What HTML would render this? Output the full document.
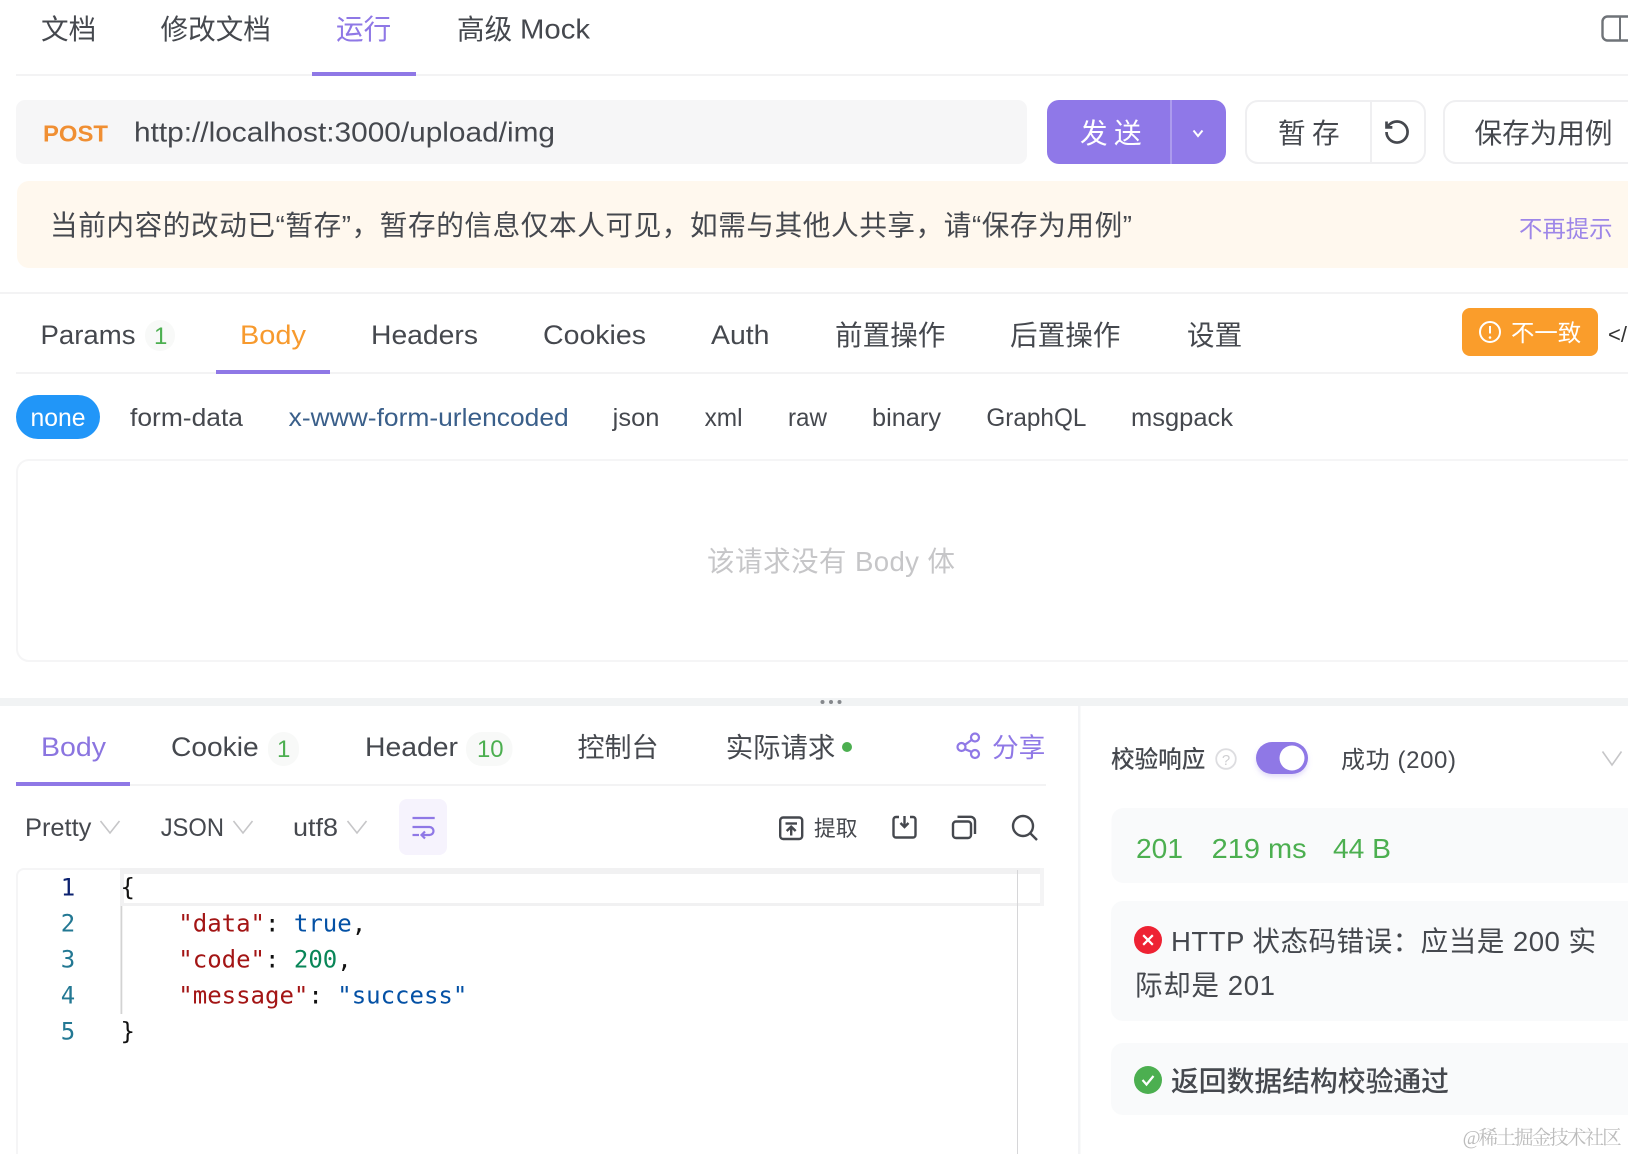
<!DOCTYPE html>
<html lang="zh-CN"><head><meta charset="utf-8"><title>运行</title>
<style>
html,body{margin:0;padding:0;background:#fff;width:1628px;height:1154px;overflow:hidden}
svg{display:block;filter:blur(.35px)}
text{font-family:"Liberation Sans","Noto Sans CJK SC",sans-serif;fill:#45484e;font-size:27.6px}
.l{font-size:27px}
.s{font-size:25px}
.p{fill:#8f78e6}
.g{fill:#4caf50}
.m{font-family:"DejaVu Sans Mono","Liberation Mono",monospace;font-size:24px;fill:#111}
.n{fill:#237893;text-anchor:middle}
</style></head><body>
<svg width="1628" height="1154" viewBox="0 0 1628 1154" xmlns="http://www.w3.org/2000/svg">
<defs><filter id="sh" x="-20%" y="-20%" width="140%" height="160%"><feDropShadow dx="0" dy="3" stdDeviation="2.500" flood-color="#8f78e6" flood-opacity=".25"/></filter></defs>
<rect width="1628" height="1154" fill="#fff"/>

<!-- top tabs -->
<text x="41" y="39">文档</text>
<text x="160.500" y="39">修改文档</text>
<text x="336" y="39" class="p">运行</text>
<text x="457" y="39">高级</text>
<text x="520" y="38.500" style="font-size:27.500px" textLength="70" lengthAdjust="spacingAndGlyphs">Mock</text>
<rect x="16" y="74" width="1612" height="2" fill="#f3f3f4"/>
<rect x="312" y="72" width="104" height="4" fill="#8f78e6"/>
<rect x="1602.500" y="16.500" width="40" height="24" rx="5" fill="none" stroke="#6f7378" stroke-width="2.400"/>
<line x1="1620" y1="16" x2="1620" y2="41" stroke="#6f7378" stroke-width="2"/>

<!-- url bar -->
<rect x="16" y="100" width="1011" height="64" rx="9" fill="#f6f6f7"/>
<text x="43" y="141.700" style="font-size:23px;font-weight:700;fill:#f08f33" textLength="65" lengthAdjust="spacingAndGlyphs">POST</text>
<text x="134" y="141.700" style="font-size:28px" textLength="421" lengthAdjust="spacingAndGlyphs">http://localhost:3000/upload/img</text>
<rect x="1047" y="100" width="179" height="64" rx="12" fill="#8f78e8"/>
<line x1="1171" y1="100" x2="1171" y2="164" stroke="#b6a7f0" stroke-width="1.500"/>
<text x="1080" y="143" style="fill:#fff">发</text>
<text x="1114" y="143" style="fill:#fff">送</text>
<polyline points="1193.500,130.500 1198,136 1202.500,130.500" fill="none" stroke="#fff" stroke-width="2"/>
<rect x="1246" y="101" width="179" height="62" rx="12" fill="#fff" stroke="#efeff1" stroke-width="2"/>
<line x1="1371" y1="101" x2="1371" y2="163" stroke="#efeff1" stroke-width="2"/>
<text x="1278" y="143">暂</text>
<text x="1312" y="143">存</text>
<g transform="translate(1383,118) scale(1.17)" fill="none" stroke="#45484e" stroke-width="2.300"><path d="M3 12a9 9 0 1 0 9-9 9.750 9.750 0 0 0-6.740 2.740L3 8"/><path d="M3 3v5h5"/></g>
<rect x="1444" y="101" width="220" height="62" rx="12" fill="#fff" stroke="#efeff1" stroke-width="2"/>
<text x="1474.500" y="143">保存为用例</text>

<!-- banner -->
<rect x="17" y="181" width="1640" height="87" rx="12" fill="#fff8ee"/>
<text x="50" y="235" textLength="1082">当前内容的改动已“暂存”，暂存的信息仅本人可见，如需与其他人共享，请“保存为用例”</text>
<text x="1519" y="237" style="font-size:23.400px;fill:#9d86e8">不再提示</text>
<rect x="0" y="292" width="1628" height="2" fill="#f3f3f4"/>

<!-- request tabs -->
<text x="40.500" y="344" class="l" textLength="95" lengthAdjust="spacingAndGlyphs">Params</text>
<rect x="145" y="320" width="30" height="31" rx="15" fill="#f8f9f8"/>
<text x="154" y="344" class="g" style="font-size:24px">1</text>
<text x="240" y="344" class="l" style="fill:#f79a2e" textLength="66" lengthAdjust="spacingAndGlyphs">Body</text>
<text x="371" y="344" class="l" textLength="107" lengthAdjust="spacingAndGlyphs">Headers</text>
<text x="543" y="344" class="l" textLength="103" lengthAdjust="spacingAndGlyphs">Cookies</text>
<text x="711" y="344" class="l" textLength="58.500" lengthAdjust="spacingAndGlyphs">Auth</text>
<text x="835" y="345">前置操作</text>
<text x="1010" y="345">后置操作</text>
<text x="1187" y="345">设置</text>
<rect x="16" y="372" width="1612" height="2" fill="#f3f3f4"/>
<rect x="216" y="370" width="114" height="4" fill="#8f78e6"/>
<rect x="1462" y="308" width="136" height="48" rx="8" fill="#fa9d2b"/>
<circle cx="1490" cy="332" r="10" fill="none" stroke="#fff" stroke-width="2"/>
<line x1="1490" y1="326" x2="1490" y2="333.500" stroke="#fff" stroke-width="2"/>
<circle cx="1490" cy="337.500" r="1.300" fill="#fff"/>
<text x="1511" y="341" style="font-size:23.400px;fill:#fff">不一致</text>
<text x="1608" y="342" style="font-size:22px;fill:#333">&lt;/&gt;</text>

<!-- body types -->
<rect x="16" y="395" width="84" height="44" rx="22" fill="#2196f8"/>
<text x="30.500" y="426" class="s" style="fill:#fff" textLength="55" lengthAdjust="spacingAndGlyphs">none</text>
<text x="130" y="426" class="s" textLength="113" lengthAdjust="spacingAndGlyphs">form-data</text>
<text x="288.700" y="426" class="s" style="fill:#3a5f8a" textLength="280" lengthAdjust="spacingAndGlyphs">x-www-form-urlencoded</text>
<text x="612.700" y="426" class="s" textLength="46.700" lengthAdjust="spacingAndGlyphs">json</text>
<text x="704.600" y="426" class="s" textLength="38" lengthAdjust="spacingAndGlyphs">xml</text>
<text x="788" y="426" class="s" textLength="39" lengthAdjust="spacingAndGlyphs">raw</text>
<text x="872" y="426" class="s" textLength="69" lengthAdjust="spacingAndGlyphs">binary</text>
<text x="986.400" y="426" class="s" textLength="100" lengthAdjust="spacingAndGlyphs">GraphQL</text>
<text x="1131" y="426" class="s" textLength="102" lengthAdjust="spacingAndGlyphs">msgpack</text>

<rect x="17" y="460" width="1660" height="201" rx="12" fill="#fff" stroke="#f5f5f6" stroke-width="2"/>
<text x="707" y="571" style="fill:#c6c6c8" textLength="248">该请求没有 Body 体</text>

<!-- resize bar -->
<rect x="0" y="698" width="1628" height="8" fill="#f1f3f4"/>
<circle cx="822.500" cy="702" r="2" fill="#85888c"/>
<circle cx="831" cy="702" r="2" fill="#85888c"/>
<circle cx="839.500" cy="702" r="2" fill="#85888c"/>
<rect x="1078" y="706" width="2.500" height="448" fill="#f3f4f6"/>

<!-- response tabs -->
<text x="41" y="756" class="l" style="fill:#8b75e0" textLength="65" lengthAdjust="spacingAndGlyphs">Body</text>
<text x="171" y="756" class="l" textLength="87.600" lengthAdjust="spacingAndGlyphs">Cookie</text>
<rect x="268" y="732" width="31" height="34" rx="15.500" fill="#f8f9f8"/>
<text x="277" y="757" class="g" style="font-size:24px">1</text>
<text x="365" y="756" class="l" textLength="93" lengthAdjust="spacingAndGlyphs">Header</text>
<rect x="466" y="732" width="46.500" height="34" rx="16" fill="#f8f9f8"/>
<text x="477" y="757" class="g" style="font-size:24px" textLength="26.600" lengthAdjust="spacingAndGlyphs">10</text>
<text x="577.500" y="757" style="font-size:27px">控制台</text>
<text x="725.700" y="757" style="font-size:27.400px">实际请求</text>
<circle cx="847" cy="747" r="5" fill="#4caf50"/>
<g fill="none" stroke="#8f78e6" stroke-width="2.200">
<circle cx="961.500" cy="747" r="4"/><circle cx="975" cy="737.500" r="4"/><circle cx="975" cy="754" r="4"/>
<line x1="965" y1="744.800" x2="971.500" y2="740"/><line x1="965" y1="749.200" x2="971.500" y2="751.800"/>
</g>
<text x="992" y="757" class="p" style="font-size:26.700px">分享</text>
<rect x="16" y="784" width="1030" height="2" fill="#f3f3f4"/>
<rect x="16" y="782" width="114" height="4" fill="#8f78e6"/>

<!-- toolbar -->
<text x="25" y="836" class="s" textLength="66.400" lengthAdjust="spacingAndGlyphs">Pretty</text>
<polyline points="100.500,821 110,833 119.500,821" fill="none" stroke="#c6c6c8" stroke-width="1.600"/>
<text x="160.700" y="836" class="s" textLength="63.300" lengthAdjust="spacingAndGlyphs">JSON</text>
<polyline points="233.500,821 243,833 252.500,821" fill="none" stroke="#c6c6c8" stroke-width="1.600"/>
<text x="293" y="836" class="s" textLength="45" lengthAdjust="spacingAndGlyphs">utf8</text>
<polyline points="347.500,821 357,833 366.500,821" fill="none" stroke="#c6c6c8" stroke-width="1.600"/>
<rect x="399" y="799" width="48" height="56" rx="8" fill="#f6f3fd"/>
<g fill="none" stroke="#8f78e6" stroke-width="2.200">
<line x1="412.500" y1="818" x2="434.700" y2="818"/>
<path d="M412.500 827H429.500a4 4 0 0 1 0 8H422"/>
<line x1="412.500" y1="835" x2="419" y2="835"/>
<polyline points="425,831.500 421.500,835 425,838.500"/>
</g>
<g fill="none" stroke="#45484e" stroke-width="2.400">
<rect x="780.200" y="817.500" width="22" height="21.500" rx="3"/>
<line x1="785.500" y1="823.500" x2="797" y2="823.500"/>
<line x1="791.200" y1="827" x2="791.200" y2="835.500"/>
<polyline points="786.700,831 791.200,826.700 795.700,831"/>
<path d="M899 817H896a2.500 2.500 0 0 0-2.500 2.500V835a2.500 2.500 0 0 0 2.500 2.500H913a2.500 2.500 0 0 0 2.500-2.500V819.500a2.500 2.500 0 0 0-2.500-2.500H910"/>
<line x1="904.500" y1="816" x2="904.500" y2="826"/>
<polyline points="900.500,823 904.500,827 908.500,823"/>
<rect x="953" y="821.500" width="18" height="16.500" rx="3"/>
<path d="M957.500 816.800H970.500a4.500 4.500 0 0 1 4.500 4.500V834"/>
<circle cx="1023" cy="826" r="10"/>
<line x1="1030.500" y1="833.500" x2="1037" y2="840"/>
</g>
<text x="814" y="836" style="font-size:21.700px">提取</text>

<!-- editor -->
<path d="M17 1154V876a7 7 0 0 1 7-7H120" fill="none" stroke="#f5f5f6" stroke-width="2"/>
<rect x="120" y="868" width="924" height="6" fill="#f1f1f2"/>
<rect x="120" y="868" width="4" height="38" fill="#f1f1f2"/>
<rect x="120" y="903" width="924" height="3" fill="#f1f1f2"/>
<rect x="1040" y="868" width="4" height="38" fill="#f4f4f5"/>
<rect x="1017" y="870" width="1" height="284" fill="#d6d6d8"/>
<rect x="120.500" y="906" width="1.800" height="108" fill="#d3d3d3"/>
<text class="m n" x="68" y="895.700" style="fill:#0b216f">1</text>
<text class="m n" x="68" y="931.700">2</text>
<text class="m n" x="68" y="967.700">3</text>
<text class="m n" x="68" y="1003.700">4</text>
<text class="m n" x="68" y="1039.700">5</text>
<text class="m" x="120.500" y="895.700">{</text>
<text class="m" x="120.500" y="931.700" xml:space="preserve" style="white-space:pre">    <tspan style="fill:#a31515">"data"</tspan>: <tspan style="fill:#0451a5">true</tspan>,</text>
<text class="m" x="120.500" y="967.700" xml:space="preserve" style="white-space:pre">    <tspan style="fill:#a31515">"code"</tspan>: <tspan style="fill:#098658">200</tspan>,</text>
<text class="m" x="120.500" y="1003.700" xml:space="preserve" style="white-space:pre">    <tspan style="fill:#a31515">"message"</tspan>: <tspan style="fill:#0451a5">"success"</tspan></text>
<text class="m" x="120.500" y="1039.700">}</text>

<!-- right panel -->
<text x="1111" y="767.500" style="font-size:23.600px;font-weight:500">校验响应</text>
<circle cx="1226" cy="759" r="9.800" fill="none" stroke="#dddde0" stroke-width="1.800"/>
<text x="1226" y="765" text-anchor="middle" style="font-size:15px;fill:#cfcfd2">?</text>
<rect x="1256" y="742" width="52" height="32" rx="16" fill="#8f78e6" filter="url(#sh)"/>
<circle cx="1292" cy="758" r="12.500" fill="#fff"/>
<text x="1341" y="768" style="font-size:24px" textLength="115">成功 (200)</text>
<polyline points="1602.500,751.500 1612,765 1621.500,751.500" fill="none" stroke="#c6c6c8" stroke-width="1.600"/>

<rect x="1111.500" y="808" width="540" height="75" rx="12" fill="#f9fafb"/>
<text x="1136" y="858" class="g" style="font-size:27.400px" textLength="47" lengthAdjust="spacingAndGlyphs">201</text>
<text x="1211.600" y="858" class="g" style="font-size:27.400px" textLength="95" lengthAdjust="spacingAndGlyphs">219 ms</text>
<text x="1333" y="858" class="g" style="font-size:27.400px" textLength="58" lengthAdjust="spacingAndGlyphs">44 B</text>

<rect x="1111" y="901" width="540" height="120" rx="12" fill="#f9fafb"/>
<circle cx="1148" cy="940" r="14" fill="#ee2233"/>
<g stroke="#fff" stroke-width="2.200"><line x1="1143.200" y1="935.200" x2="1152.800" y2="944.800"/><line x1="1152.800" y1="935.200" x2="1143.200" y2="944.800"/></g>
<text x="1171" y="951" textLength="425">HTTP 状态码错误：应当是 200 实</text>
<text x="1135" y="995" textLength="140">际却是 201</text>

<rect x="1111" y="1043" width="540" height="72" rx="12" fill="#f9fafb"/>
<circle cx="1148" cy="1080" r="14" fill="#4caf50"/>
<polyline points="1142.500,1080 1146.500,1084.500 1153.500,1076" fill="none" stroke="#fff" stroke-width="2.200"/>
<text x="1171" y="1091" style="font-size:27.800px;font-weight:500">返回数据结构校验通过</text>

<text x="1462.600" y="1144" textLength="159" style="font-family:'Liberation Serif','Noto Serif CJK SC',serif;font-size:19.500px;fill:#bcbcbc">@稀土掘金技术社区</text>
</svg>
</body></html>
